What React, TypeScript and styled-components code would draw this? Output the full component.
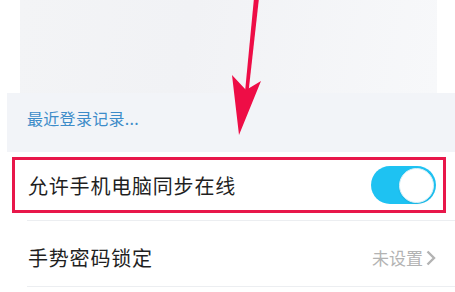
import React from "react";
import styled, { createGlobalStyle } from "styled-components";

const Global = createGlobalStyle`
  html, body { margin: 0; padding: 0; background: #ffffff; }
  body { font-family: "Noto Sans CJK SC", "Noto Sans", sans-serif; }
`;

const Page = styled.div`
  position: relative;
  width: 455px;
  height: 292px;
  overflow: hidden;
  background: #ffffff;
  display: flex;
  flex-direction: column;
`;

const TopCard = styled.div`
  height: 93px;
  margin: 0 18px 0 20px;
  background: linear-gradient(100deg, #f3f4f6 0%, #f1f2f5 40%, #f7f8fa 100%);
`;

const RecentSection = styled.div`
  height: 59px;
  margin-left: 7px;
  padding-left: 20px;
  background: #f2f4f8;
  display: flex;
  align-items: center;
  box-sizing: border-box;
  padding-bottom: 10px;
`;

const RecentLink = styled.span`
  color: #3d8cc9;
  font-size: 16px;
  letter-spacing: 0.3px;
`;

const List = styled.div`
  display: flex;
  flex-direction: column;
  padding-top: 5px;
`;

const Row = styled.div<{ $highlight?: boolean }>`
  display: flex;
  align-items: center;
  justify-content: space-between;
  box-sizing: border-box;
  height: ${(p) => (p.$highlight ? "56px" : "66px")};
  margin: ${(p) => (p.$highlight ? "0 9px 0 12px" : "0 0 0 27px")};
  padding: ${(p) => (p.$highlight ? "0 7px 0 13px" : "8px 18px 0 1px")};
  border: ${(p) => (p.$highlight ? "3px solid #e8174a" : "none")};
  border-bottom: ${(p) => (p.$highlight ? "3px solid #e8174a" : "1px solid #eceef1")};
`;

const Divider = styled.div`
  height: 1px;
  margin: 7px 0 0 27px;
  background: #eceef1;
`;

const Label = styled.span`
  font-size: 20px;
  color: #1f1f1f;
  letter-spacing: 0.8px;
`;

const Value = styled.span`
  display: flex;
  align-items: center;
  gap: 2px;
  font-size: 17px;
  color: #b3b3b3;
`;

const Toggle = styled.div<{ $on?: boolean }>`
  position: relative;
  width: 65px;
  height: 38px;
  border-radius: 19px;
  background: ${(p) => (p.$on ? "#1ec2f2" : "#e5e5e5")};
`;

const Knob = styled.div`
  position: absolute;
  top: 2px;
  right: 2px;
  width: 33px;
  height: 33px;
  border-radius: 50%;
  background: #ffffff;
  border: 1px solid #d5eff8;
  box-shadow: 0 1px 2px rgba(0, 0, 0, 0.08);
`;

const ArrowLayer = styled.svg`
  position: absolute;
  left: 0;
  top: 0;
  pointer-events: none;
`;

export default function App() {
  return (
    <>
      <Global />
      <Page>
        <TopCard />
        <RecentSection>
          <RecentLink>最近登录记录...</RecentLink>
        </RecentSection>
        <List>
          <Row $highlight>
            <Label>允许手机电脑同步在线</Label>
            <Toggle $on>
              <Knob />
            </Toggle>
          </Row>
          <Divider />
          <Row>
            <Label>手势密码锁定</Label>
            <Value>
              未设置
              <svg width="12" height="18" viewBox="0 0 12 18">
                <path d="M2.5 2.5 L9 9 L2.5 15.5" fill="none" stroke="#b3b3b3" strokeWidth="2.4" />
              </svg>
            </Value>
          </Row>
        </List>
        <ArrowLayer width="455" height="292" viewBox="0 0 455 292">
          <path d="M254 -2 L259 -2 L248.5 92 L245 92 Z" fill="#ee0d46" />
          <path d="M232 75 L246 90 L261 81 L239 135 Z" fill="#ee0d46" />
        </ArrowLayer>
      </Page>
    </>
  );
}
